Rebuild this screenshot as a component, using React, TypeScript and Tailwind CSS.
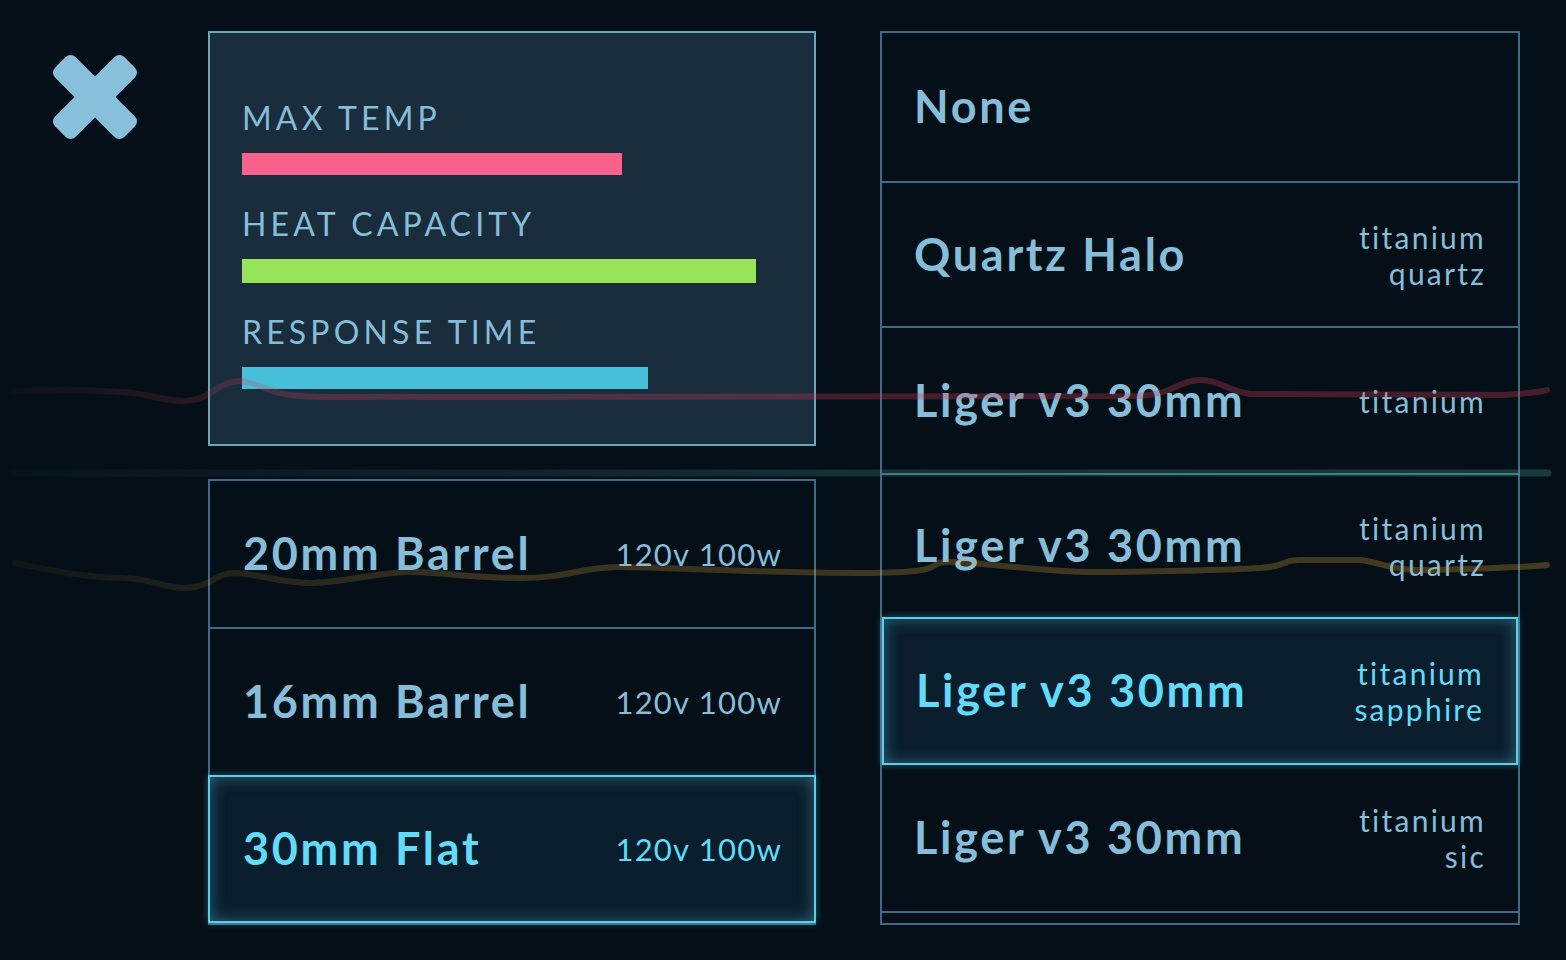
import React from "react";

const font = { fontFamily: "Lato, 'Noto Sans', 'Liberation Sans', sans-serif" };

function CloseIcon() {
  return (
    <svg width="88" height="88" viewBox="0 0 88 88">
      <g fill="#88bfda">
        <rect x="-5" y="29.5" width="98" height="29" rx="7" transform="rotate(45 44 44)" />
        <rect x="-5" y="29.5" width="98" height="29" rx="7" transform="rotate(-45 44 44)" />
      </g>
    </svg>
  );
}

function Stat({ label, barClass }: { label: string; barClass: string }) {
  return (
    <div className="flex flex-col">
      <div className="text-[32px] leading-[32px] tracking-[0.13em] text-[#86bdd8] h-[32px]">{label}</div>
      <div className={barClass} />
    </div>
  );
}

const selShadow =
  " border-2 border-[#5ccdea] bg-[#0a1e2d] shadow-[inset_0_0_16px_rgba(92,205,234,0.4),0_0_7px_rgba(92,205,234,0.4)]";

function LeftRow({ name, spec, h, selected, top }: { name: string; spec: string; h: string; selected?: boolean; top?: boolean }) {
  const c = selected ? "text-[#62dbf8]" : "text-[#86bdd8]";
  const base = "flex items-center justify-between pl-[33px] pr-[32px] " + h;
  const cls = selected ? base + " -mx-[2px]" + selShadow : base + (top ? " border-t-2 border-[#3f6b86]" : "");
  return (
    <div className={cls}>
      <span className={"text-[45px] font-bold tracking-[0.06em] " + c}>{name}</span>
      <span className={"text-[31px] tracking-[0.04em] " + c}>{spec}</span>
    </div>
  );
}

type RItem = { name?: string; sub?: string[]; h: string; top?: boolean; selected?: boolean };

function RightRow({ item }: { item: RItem }) {
  const c = item.selected ? "text-[#62dbf8]" : "text-[#86bdd8]";
  const cls =
    "flex items-center justify-between pl-[32px] pr-[32px] " +
    item.h +
    (item.top ? " border-t-2 border-[#3f6b86]" : "") +
    (item.selected ? selShadow : "");
  return (
    <div className={cls}>
      {item.name ? <span className={"text-[45px] font-bold tracking-[0.06em] " + c}>{item.name}</span> : <span />}
      {item.sub ? (
        <div className={"flex flex-col items-end text-[30px] leading-[36px] tracking-[0.075em] " + c}>
          {item.sub.map((s, i) => (
            <span key={i}>{s}</span>
          ))}
        </div>
      ) : null}
    </div>
  );
}

export default function App() {
  const right: RItem[] = [
    { name: "None", h: "h-[148px]" },
    { name: "Quartz Halo", sub: ["titanium", "quartz"], h: "h-[145px]", top: true },
    { name: "Liger v3 30mm", sub: ["titanium"], h: "h-[147px]", top: true },
    { name: "Liger v3 30mm", sub: ["titanium", "quartz"], h: "h-[144px]", top: true },
    { name: "Liger v3 30mm", sub: ["titanium", "sapphire"], h: "h-[148px]", selected: true },
    { name: "Liger v3 30mm", sub: ["titanium", "sic"], h: "h-[146px]" },
    { h: "h-[12px]", top: true },
  ];
  return (
    <div className="relative w-[1566px] h-[960px] bg-[#050f17] overflow-hidden flex" style={font}>
      <div className="w-[208px] shrink-0 pl-[51px] pt-[53px]">
        <CloseIcon />
      </div>
      <div className="w-[608px] shrink-0 pt-[31px] flex flex-col gap-[33px]">
        <div className="h-[415px] border-2 border-[#6ea7bb] bg-[#1a2d3d] pl-[32px] pt-[69px] flex flex-col gap-[33px]">
          <Stat label="MAX TEMP" barClass="mt-[19px] h-[22px] w-[380px] bg-[#f8618b]" />
          <Stat label="HEAT CAPACITY" barClass="mt-[19px] h-[24px] w-[514px] bg-[#97e35a]" />
          <Stat label="RESPONSE TIME" barClass="mt-[19px] h-[22px] w-[406px] bg-[#48bfd9]" />
        </div>
        <div className="h-[446px] border-2 border-[#3f6b86] flex flex-col">
          <LeftRow name="20mm Barrel" spec="120v 100w" h="h-[146px]" />
          <LeftRow name="16mm Barrel" spec="120v 100w" h="h-[148px]" top />
          <LeftRow name="30mm Flat" spec="120v 100w" h="h-[148px]" selected />
        </div>
      </div>
      <div className="w-[640px] shrink-0 ml-[64px] pt-[31px]">
        <div className="h-[894px] border-2 border-[#3f6b86] flex flex-col">
          {right.map((it, i) => (
            <RightRow key={i} item={it} />
          ))}
        </div>
      </div>
      <svg className="absolute inset-0 pointer-events-none" width="1566" height="960" viewBox="0 0 1566 960">
        <defs>
          <linearGradient id="fr" x1="15" y1="0" x2="1548" y2="0" gradientUnits="userSpaceOnUse">
            <stop offset="0" stopColor="rgb(200,60,85)" stopOpacity="0.04" />
            <stop offset="0.2" stopColor="rgb(200,60,85)" stopOpacity="0.3" />
            <stop offset="1" stopColor="rgb(200,60,85)" stopOpacity="0.33" />
          </linearGradient>
          <linearGradient id="fo" x1="15" y1="0" x2="1548" y2="0" gradientUnits="userSpaceOnUse">
            <stop offset="0" stopColor="rgb(215,160,55)" stopOpacity="0.05" />
            <stop offset="0.3" stopColor="rgb(215,160,55)" stopOpacity="0.24" />
            <stop offset="1" stopColor="rgb(215,160,55)" stopOpacity="0.3" />
          </linearGradient>
          <linearGradient id="ft" x1="15" y1="0" x2="1548" y2="0" gradientUnits="userSpaceOnUse">
            <stop offset="0" stopColor="rgb(70,160,140)" stopOpacity="0.03" />
            <stop offset="0.6" stopColor="rgb(70,160,140)" stopOpacity="0.25" />
            <stop offset="1" stopColor="rgb(70,160,140)" stopOpacity="0.3" />
          </linearGradient>
        </defs>
        <path d="M15 473 L1548 473" stroke="url(#ft)" strokeWidth="7" strokeLinecap="round" fill="none" />
        <path
          d="M15 391 C60 390 120 389 150 396 S195 404 215 390 S245 380 270 390 S330 396 430 397 L1140 396 C1170 395 1180 380 1200 380 S1225 390 1250 394 L1500 395 C1520 394 1540 392 1547 390"
          stroke="url(#fr)"
          strokeWidth="6"
          strokeLinecap="round"
          fill="none"
        />
        <path
          d="M15 563 C50 570 80 577 120 578 S160 588 185 588 S215 573 235 573 S280 583 310 583 S380 572 410 572 S470 578 520 578 S580 567 620 567 S760 573 860 573 S920 562 950 562 S1040 572 1090 572 S1230 570 1260 568 S1280 560 1300 560 L1360 560 C1380 562 1390 570 1420 570 S1530 567 1547 565"
          stroke="url(#fo)"
          strokeWidth="6"
          strokeLinecap="round"
          fill="none"
        />
      </svg>
    </div>
  );
}
